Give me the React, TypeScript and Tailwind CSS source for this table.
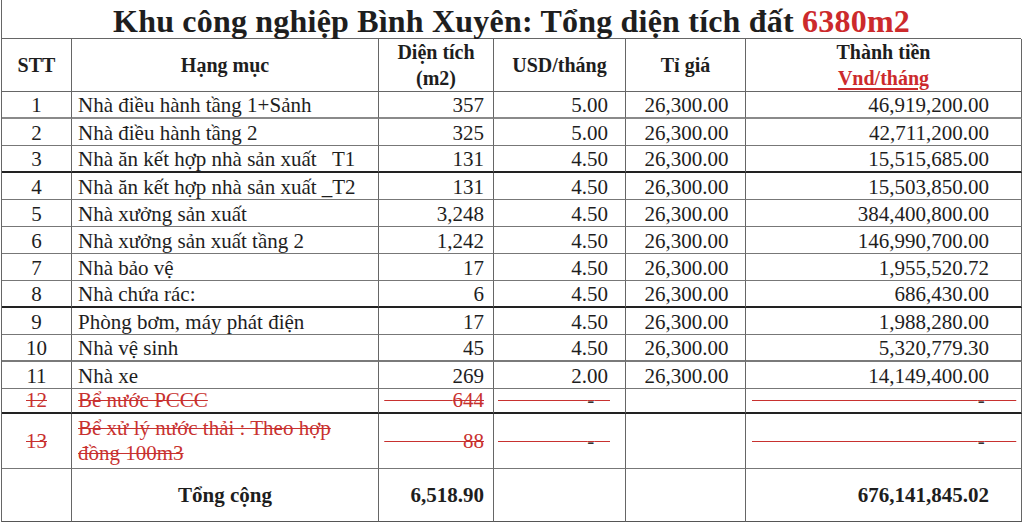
import React from "react";

const RED = "text-[#c8312f]";

const GRID = "grid grid-cols-[70px_307px_115px_132px_120px_276px]";

type Row = [string, string, string, string, string, string];

const rows: Row[] = [
  ["1", "Nhà điều hành tầng 1+Sảnh", "357", "5.00", "26,300.00", "46,919,200.00"],
  ["2", "Nhà điều hành tầng 2", "325", "5.00", "26,300.00", "42,711,200.00"],
  ["3", "Nhà ăn kết hợp nhà sản xuất   T1", "131", "4.50", "26,300.00", "15,515,685.00"],
  ["4", "Nhà ăn kết hợp nhà sản xuất _T2", "131", "4.50", "26,300.00", "15,503,850.00"],
  ["5", "Nhà xưởng sản xuất", "3,248", "4.50", "26,300.00", "384,400,800.00"],
  ["6", "Nhà xưởng sản xuất tầng 2", "1,242", "4.50", "26,300.00", "146,990,700.00"],
  ["7", "Nhà bảo vệ", "17", "4.50", "26,300.00", "1,955,520.72"],
  ["8", "Nhà chứa rác:", "6", "4.50", "26,300.00", "686,430.00"],
  ["9", "Phòng bơm, máy phát điện", "17", "4.50", "26,300.00", "1,988,280.00"],
  ["10", "Nhà vệ sinh", "45", "4.50", "26,300.00", "5,320,779.30"],
  ["11", "Nhà xe", "269", "2.00", "26,300.00", "14,149,400.00"],
];

const bottoms: string[] = [
  "border-b-2 border-b-[#8a8a8a]",
  "border-b border-b-[#777]",
  "border-b-2 border-b-[#222]",
  "border-b border-b-[#777]",
  "border-b border-b-[#777]",
  "border-b border-b-[#777]",
  "border-b border-b-[#777]",
  "border-b-2 border-b-[#222]",
  "border-b border-b-[#777]",
  "border-b-2 border-b-[#7a7a7a]",
  "border-b border-b-[#777]",
];

const nb = (n: number) => "\u00a0".repeat(n);

function Cell({
  children,
  className = "",
  bottom = "border-b border-b-[#777]",
}: {
  children?: React.ReactNode;
  className?: string;
  bottom?: string;
}) {
  return (
    <div className={`flex items-center border-r border-r-[#666] ${bottom} ${className}`}>
      {children}
    </div>
  );
}

function Strike({ children, className = "" }: { children: React.ReactNode; className?: string }) {
  return (
    <span className={`line-through decoration-[#c8312f] decoration-1 whitespace-pre ${className}`}>
      {children}
    </span>
  );
}

export default function App() {
  return (
    <div
      className="w-[1024px] h-[526px] bg-white text-[#1e1e1e] overflow-hidden"
      style={{ fontFamily: '"Liberation Serif", "Times New Roman", serif' }}
    >
      <div className="ml-px w-[1020px] border-l border-l-[#666]">
        {/* Title */}
        <div className="h-[38px] flex items-center justify-center text-[32px] tracking-[0.2px] font-bold leading-none pt-[3px]">
          <span>
            Khu công nghiệp Bình Xuyên: Tổng diện tích đất{" "}
            <span className="text-[#cc2a2c]">6380m2</span>
          </span>
        </div>

        {/* Header */}
        <div className={`${GRID} h-[54px] border-t border-t-[#666] font-bold text-[20px] leading-[26px]`}>
          <Cell className="justify-center" bottom="border-b border-b-[#666]">STT</Cell>
          <Cell className="justify-center" bottom="border-b border-b-[#666]">Hạng mục</Cell>
          <Cell className="justify-center text-center" bottom="border-b border-b-[#666]">
            <span>
              Diện tích
              <br />
              (m2)
            </span>
          </Cell>
          <Cell className="justify-center" bottom="border-b border-b-[#666]">USD/tháng</Cell>
          <Cell className="justify-center" bottom="border-b border-b-[#666]">Tỉ giá</Cell>
          <Cell className="justify-center text-center" bottom="border-b border-b-[#666]">
            <span>
              Thành tiền
              <br />
              <span className="text-[#cc2a2c] underline decoration-2 underline-offset-[3px]">Vnd/tháng</span>
            </span>
          </Cell>
        </div>

        {/* Body */}
        <div className="text-[21px] leading-none">
          {rows.map((r, i) => (
            <div key={i} className={`${GRID} h-[27px]`}>
              <Cell className="justify-center pt-[2px]" bottom={bottoms[i]}>{r[0]}</Cell>
              <Cell className="pl-[6px] pt-[2px] whitespace-pre" bottom={bottoms[i]}>{r[1]}</Cell>
              <Cell className="justify-end pr-[9px] pt-[2px]" bottom={bottoms[i]}>{r[2]}</Cell>
              <Cell className="justify-end pr-[17px] pt-[2px]" bottom={bottoms[i]}>{r[3]}</Cell>
              <Cell className="justify-center pl-[2px] pt-[2px]" bottom={bottoms[i]}>{r[4]}</Cell>
              <Cell className="justify-end pr-[32px] pt-[2px]" bottom={bottoms[i]}>{r[5]}</Cell>
            </div>
          ))}

          {/* Row 12 */}
          <div className={`${GRID} h-[25px] ${RED}`}>
            <Cell className="justify-center" bottom="border-b-2 border-b-[#222]">
              <Strike>12</Strike>
            </Cell>
            <Cell className="pl-[6px]" bottom="border-b-2 border-b-[#222]">
              <Strike>Bể nước PCCC</Strike>
            </Cell>
            <Cell className="justify-end pr-[9px]" bottom="border-b-2 border-b-[#222]">
              <Strike>{nb(13)}644</Strike>
            </Cell>
            <Cell className="pl-[4px]" bottom="border-b-2 border-b-[#222]">
              <Strike>
                {nb(17)}
                <span className="text-[#333]">-</span>
                {nb(3)}
              </Strike>
            </Cell>
            <Cell bottom="border-b-2 border-b-[#222]" />
            <Cell className="pl-[6px]" bottom="border-b-2 border-b-[#222]">
              <Strike>
                {nb(43)}
                <span className="text-[#333]">-</span>
                {nb(6)}
              </Strike>
            </Cell>
          </div>

          {/* Row 13 */}
          <div className={`${GRID} h-[55px] ${RED}`}>
            <Cell className="justify-center">
              <Strike>13</Strike>
            </Cell>
            <Cell className="pl-[6px] leading-[25px]">
              <span className="line-through decoration-[#c8312f] decoration-1">
                Bể xử lý nước thải : Theo hợp
                <br />
                đồng 100m3
              </span>
            </Cell>
            <Cell className="justify-end pr-[9px]">
              <Strike>{nb(15)}88</Strike>
            </Cell>
            <Cell className="pl-[4px]">
              <Strike>
                {nb(17)}
                <span className="text-[#333]">-</span>
                {nb(3)}
              </Strike>
            </Cell>
            <Cell />
            <Cell className="pl-[6px]">
              <Strike>
                {nb(43)}
                <span className="text-[#333]">-</span>
                {nb(6)}
              </Strike>
            </Cell>
          </div>

          {/* Total */}
          <div className={`${GRID} h-[53px] font-bold`}>
            <Cell bottom="border-b border-b-[#555]" />
            <Cell className="justify-center" bottom="border-b border-b-[#555]">Tổng cộng</Cell>
            <Cell className="justify-end pr-[9px]" bottom="border-b border-b-[#555]">6,518.90</Cell>
            <Cell bottom="border-b border-b-[#555]" />
            <Cell bottom="border-b border-b-[#555]" />
            <Cell className="justify-end pr-[32px]" bottom="border-b border-b-[#555]">676,141,845.02</Cell>
          </div>
        </div>
      </div>
    </div>
  );
}
